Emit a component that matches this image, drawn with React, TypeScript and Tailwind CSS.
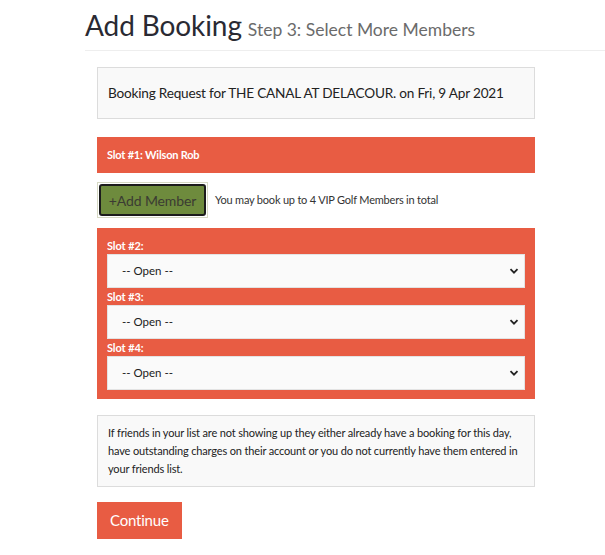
import React from 'react';

const font = { fontFamily: 'Lato, "Noto Sans", sans-serif' };

const SlotSelect = ({ label }: { label: string }) => (
  <div>
    <label className="block text-[11px] font-bold tracking-[-0.1px] text-white leading-[16px]">{label}</label>
    <div className="relative">
      <select className="w-full h-[34px] appearance-none bg-[#fafafa] border border-[#e3e3e3] pl-[14px] pr-8 text-[11.5px] text-[#222] outline-none">
        <option>-- Open --</option>
      </select>
      <svg
        className="pointer-events-none absolute right-[6px] top-1/2 -translate-y-1/2"
        width="10"
        height="10"
        viewBox="0 0 10 10"
      >
        <path d="M1.5 3.2 L5 6.7 L8.5 3.2" fill="none" stroke="#222" strokeWidth="1.8" />
      </svg>
    </div>
  </div>
);

const App: React.FC = () => {
  return (
    <div className="min-h-[555px] w-[605px] bg-white text-[#333]" style={font}>
      <div className="pl-[85px] pt-[6px]">
        <div className="flex items-baseline border-b border-[#eee] pb-[6px]">
          <h1 className="text-[28px] leading-[38px] tracking-[-0.1px] text-[#2a2a33]">Add Booking</h1>
          <span className="ml-[6px] text-[17.5px] text-[#6b6b6b]">Step 3: Select More Members</span>
        </div>
      </div>

      <div className="ml-[97px] w-[438px] pt-[16px]">
        <div className="h-[52px] flex items-center px-[10px] bg-[#f9f9f9] border border-[#dcdcdc] text-[13.6px] whitespace-nowrap tracking-[-0.2px] text-[#222]">
          Booking Request for THE CANAL AT DELACOUR. on Fri, 9 Apr 2021
        </div>

        <div className="mt-[18px] h-[36px] flex items-center px-[10px] bg-[#e85c43] text-[11px] font-bold tracking-[-0.2px] text-white">
          Slot #1: Wilson Rob
        </div>

        <div className="mt-[9px] flex items-center">
          <button className="h-[36px] w-[111px] p-px border border-[#d6d9c4] bg-white">
            <span className="flex h-full w-full items-center justify-center rounded-[3px] border-2 border-[#1c1c1c] bg-[#6e8b3d] text-[14px] tracking-[-0.1px] text-[#3b3b33]">
              +Add Member
            </span>
          </button>
          <span className="ml-[7px] text-[11px] tracking-[-0.2px] text-[#333]">You may book up to 4 VIP Golf Members in total</span>
        </div>

        <div className="mt-[10px] bg-[#e85c43] px-[10px] pt-[10px] pb-[9px] flex flex-col gap-[1px]">
          <SlotSelect label="Slot #2:" />
          <SlotSelect label="Slot #3:" />
          <SlotSelect label="Slot #4:" />
        </div>

        <div className="mt-[16px] bg-[#f9f9f9] border border-[#dcdcdc] px-[10px] py-[8px] text-[11px] leading-[18px] tracking-[-0.15px] text-[#222]">
          If friends in your list are not showing up they either already have a booking for this day, have outstanding charges on their account or you do not currently have them entered in your friends list.
        </div>

        <button className="mt-[15px] h-[37px] px-[13px] bg-[#e85c43] text-[15px] tracking-[-0.2px] text-white">
          Continue
        </button>
      </div>
    </div>
  );
};

export default App;
